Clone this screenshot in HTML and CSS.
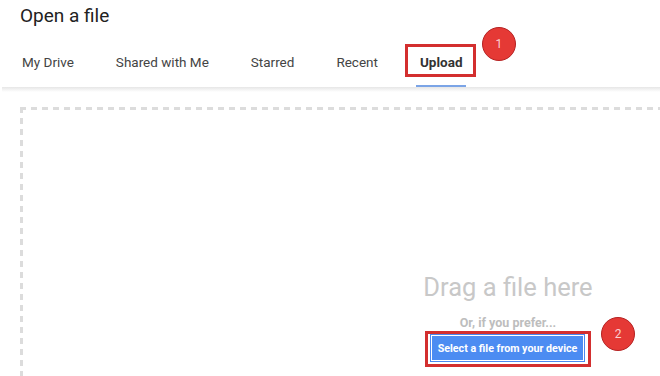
FILE: index.html
```html
<!DOCTYPE html>
<html>
<head>
    <title>Open a file</title>
    <link rel="stylesheet" href="styles.css">
</head>
<body>
    <div class="dialog-title">Open a file</div>

    <div class="tabs">
        <div class="tab">My Drive</div>
        <div class="tab">Shared with Me</div>
        <div class="tab">Starred</div>
        <div class="tab">Recent</div>
        <div class="tab tab-active">
            Upload
            <span class="mark-box"></span>
            <span class="step step-1">1</span>
        </div>
    </div>
    <div class="divider"></div>

    <div class="dropzone">
        <div class="drop-text">Drag a file here</div>
        <div class="prefer">Or, if you prefer...</div>
        <div class="select-wrap">
            <button class="select-btn">Select a file from your device</button>
            <span class="step step-2">2</span>
        </div>
    </div>
</body>
</html>
```

FILE: styles.css
```css
html, body { margin: 0; padding: 0; background: #fff; overflow: hidden; }
body { font-family: Roboto, "Liberation Sans", sans-serif; width: 660px; height: 376px; }

.dialog-title { padding: 4px 20px 0; font-size: 19px; line-height: 24px; color: #222; }

.tabs { display: flex; gap: 34px; padding-left: 18px; margin-top: 13px; }
.tab { position: relative; padding: 13px 4px 15px; font-size: 13.5px; line-height: 16px; color: #444; border-bottom: 2px solid transparent; }
.tab-active { font-weight: bold; color: #333; border-bottom-color: #7ba4e6; }

.mark-box { position: absolute; left: -11px; top: 3px; width: 65px; height: 27px; border: 3px solid #d32f2f; }

.step { position: absolute; width: 32px; height: 32px; border-radius: 50%; background: #e53935; border: 1px solid #b52222;
        color: #fbd0d0; font-size: 12px; line-height: 32px; text-align: center; font-weight: normal; }
.step-1 { left: 66px; top: -14px; }
.step-2 { left: 173px; top: -17px; }

.divider { height: 5px; margin-left: 2px; background: linear-gradient(#e6e6e6, #fff); }

.dropzone {
    width: 976px; height: 400px; margin: 15px 0 0 20px; padding-top: 165px; box-sizing: border-box;
    display: flex; flex-direction: column; align-items: center;
    background:
        repeating-linear-gradient(to right, #dcdcdc 0 6px, transparent 6px 11px) top left / 100% 3px no-repeat,
        repeating-linear-gradient(to bottom, #dcdcdc 0 6px, transparent 6px 11px) top left / 3px 100% no-repeat;
}
.drop-text { font-size: 25.5px; line-height: 30px; color: #c8c8c8; }
.prefer { margin-top: 14px; font-size: 12.5px; line-height: 14px; font-weight: bold; color: #bdbdbd; }
.select-wrap { position: relative; margin-top: 1px; padding: 0 3px 2px 2px; border: 3px solid #d32f2f; }
.select-btn {
    display: block; width: 155px; height: 28px; padding: 0; border: 1px solid #4a88f0; box-shadow: inset 0 0 0 1px #fff;
    background: #4c8cf2; color: #fff; font-family: Roboto, "Liberation Sans", sans-serif; font-size: 10.7px; font-weight: bold;
}
```
